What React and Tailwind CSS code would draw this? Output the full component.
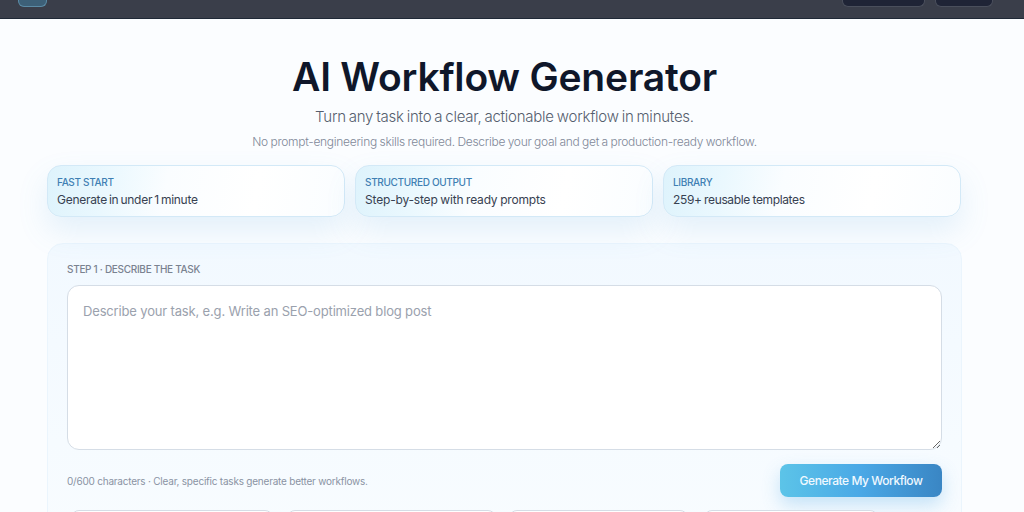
const cards = [
  ["FAST START", "Generate in under 1 minute", "tracking-[-0.28px] [word-spacing:-1px]"],
  ["STRUCTURED OUTPUT", "Step-by-step with ready prompts", "tracking-[-0.18px] [word-spacing:-0.5px]"],
  ["LIBRARY", "259+ reusable templates", "tracking-[-0.36px] [word-spacing:-0.5px]"],
];

export default function App() {
  return (
    <div className="h-[512px] w-[1024px] overflow-hidden bg-[#fbfdff] font-['Inter','Noto_Sans',sans-serif]">
      <header className="flex h-[19px] items-start justify-between border-b border-[#1f2937] bg-[#3a3e4a] pl-[18px] pr-[31px]">
        <div className="h-[7px] w-[29px] rounded-b-md border border-t-0 border-[#5b8ba6] bg-[#3d6078]" />
        <div className="flex gap-[10px]">
          <div className="h-[7px] w-[83px] rounded-b-md border border-t-0 border-[#4a4f5c] bg-[#1f2436]" />
          <div className="h-[7px] w-[58px] rounded-b-md border border-t-0 border-[#4a4f5c] bg-[#1f2436]" />
        </div>
      </header>
      <main className="ml-[47px] w-[915px]">
        <h1 className="mt-[33px] text-center text-[39px] font-semibold leading-[50px] tracking-[-0.2px] text-[#0f172a]">AI Workflow Generator</h1>
        <p className="mt-[3px] text-center text-[15px] font-light leading-[24px] tracking-[-0.24px] [word-spacing:-1px] text-[#555e6e]">Turn any task into a clear, actionable workflow in minutes.</p>
        <p className="mt-[4px] text-center text-[12px] font-light leading-[18px] tracking-[-0.28px] [word-spacing:-0.5px] text-[#7f8898]">No prompt-engineering skills required. Describe your goal and get a production-ready workflow.</p>
        <div className="mt-[14px] grid grid-cols-[298px_298px_298px] gap-[10px]">
          {cards.map(([t, d, c]) => (
            <div key={t} className="h-[52px] rounded-[14px] border border-[#d3e9f7] bg-[linear-gradient(100deg,#def3fc_0%,#eaf8fe_20%,#fafdff_40%,#ffffff_70%,#fafdff_100%)] pl-[9px] pt-[9px] shadow-[0_14px_30px_rgba(96,165,220,0.15)]">
              <div className="text-[10px] font-medium leading-[14px] tracking-[-0.33px] text-[#3f7fb3]">{t}</div>
              <div className={`mt-[1px] text-[12px] leading-[19px] text-[#374151] ${c}`}>{d}</div>
            </div>
          ))}
        </div>
        <section className="mt-[26px] h-[300px] rounded-[16px] border border-[#ebf5fd] bg-[linear-gradient(180deg,#f2f9ff_0%,#f8fcff_100%)] px-[19px] pt-[18px]">
          <div className="text-[10px] font-medium leading-[14px] tracking-[-0.3px] text-[#7a8290]">STEP 1 · DESCRIBE THE TASK</div>
          <textarea
            readOnly
            placeholder="Describe your task, e.g. Write an SEO-optimized blog post"
            className="mt-[9px] block h-[165px] w-full rounded-[12px] border border-[#d5dde6] bg-white px-[15px] py-[15px] text-[13px] leading-[20px] tracking-[-0.16px] outline-none placeholder:text-[#9aa1ad]"
          />
          <div className="mt-[14px] flex h-[33px] items-center justify-between">
            <span className="pt-[2px] text-[10px] tracking-[-0.22px] text-[#8a93a3]">0/600 characters · Clear, specific tasks generate better workflows.</span>
            <button className="h-[33px] w-[162px] rounded-lg bg-gradient-to-r from-[#5cc4e8] via-[#4aa8e6] to-[#3a86c4] text-[12px] font-medium tracking-[-0.45px] text-[#f0f9ff] shadow-[0_8px_18px_rgba(80,170,230,0.3)]">Generate My Workflow</button>
          </div>
          <div className="mt-[13px] flex pl-[4px]">
            <div className="h-[20px] w-[202px] rounded-lg border border-[#d5dde6] bg-white" />
            <div className="ml-[14px] h-[20px] w-[209px] rounded-lg border border-[#d5dde6] bg-white" />
            <div className="ml-[13px] h-[20px] w-[179px] rounded-lg border border-[#d5dde6] bg-white" />
            <div className="ml-[16px] h-[20px] w-[174px] rounded-lg border border-[#d5dde6] bg-white" />
          </div>
        </section>
      </main>
    </div>
  );
}
